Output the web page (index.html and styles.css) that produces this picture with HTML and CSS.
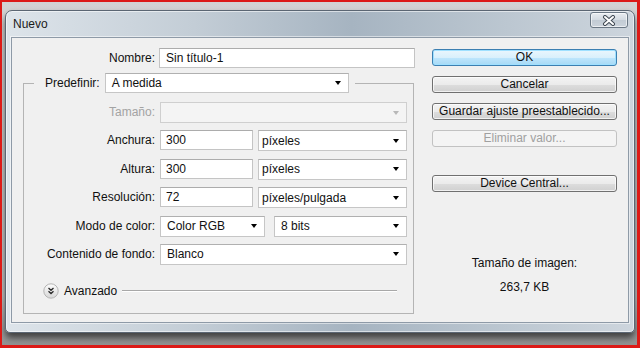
FILE: index.html
```html
<!DOCTYPE html>
<html lang="es">
<head>
    <meta charset="UTF-8">
    <meta name="viewport" content="width=device-width, initial-scale=1.0">
    <title>Nuevo</title>
    <link rel="stylesheet" href="styles.css">
</head>
<body>
    <div class="window">
        <div class="titlebar">
            <span class="title">Nuevo</span>
            <button class="close-btn" type="button">
                <svg width="14" height="11" viewBox="0 0 14 11">
                    <path d="M3 2 L11 9 M11 2 L3 9" stroke="#3f4852" stroke-width="4" stroke-linecap="round"/>
                    <path d="M3 2 L11 9 M11 2 L3 9" stroke="#fff" stroke-width="2" stroke-linecap="round"/>
                </svg>
            </button>
        </div>

        <div class="client">
            <div class="left-col">
                <div class="name-row">
                    <label for="name">Nombre:</label>
                    <input class="field" type="text" id="name" value="Sin título-1" readonly>
                </div>

                <fieldset class="group">
                    <legend>
                        <div class="preset">
                            <label>Predefinir:</label>
                            <div class="select preset-select"><span>A medida</span><i class="arrow"></i></div>
                        </div>
                    </legend>

                    <div class="form-grid">
                        <label class="is-disabled">Tamaño:</label>
                        <div class="select is-disabled"><span></span><i class="arrow"></i></div>

                        <label>Anchura:</label>
                        <div class="pair">
                            <input class="field" type="text" value="300" readonly>
                            <div class="select unit"><span>píxeles</span><i class="arrow"></i></div>
                        </div>

                        <label>Altura:</label>
                        <div class="pair">
                            <input class="field" type="text" value="300" readonly>
                            <div class="select unit"><span>píxeles</span><i class="arrow"></i></div>
                        </div>

                        <label>Resolución:</label>
                        <div class="pair">
                            <input class="field" type="text" value="72" readonly>
                            <div class="select unit"><span>píxeles/pulgada</span><i class="arrow"></i></div>
                        </div>

                        <label>Modo de color:</label>
                        <div class="pair color-pair">
                            <div class="select"><span>Color RGB</span><i class="arrow"></i></div>
                            <div class="select"><span>8 bits</span><i class="arrow"></i></div>
                        </div>

                        <label>Contenido de fondo:</label>
                        <div class="select"><span>Blanco</span><i class="arrow"></i></div>
                    </div>

                    <div class="advanced">
                        <svg class="advanced-icon" width="16" height="16" viewBox="0 0 16 16">
                            <defs>
                                <linearGradient id="knob" x1="0" y1="0" x2="0" y2="1">
                                    <stop offset="0" stop-color="#fdfdfd"/>
                                    <stop offset="1" stop-color="#d6d6d6"/>
                                </linearGradient>
                            </defs>
                            <circle cx="8" cy="8" r="7.2" fill="url(#knob)" stroke="#b4b4b4"/>
                            <path d="M5.5 5 L8 7.3 L10.5 5 M5.5 8.3 L8 10.6 L10.5 8.3" fill="none" stroke="#2a2a2a" stroke-width="1.3"/>
                        </svg>
                        <span>Avanzado</span>
                        <div class="advanced-line"></div>
                    </div>
                </fieldset>
            </div>

            <div class="right-col">
                <button class="btn btn-default" type="button">OK</button>
                <button class="btn" type="button">Cancelar</button>
                <button class="btn" type="button">Guardar ajuste preestablecido...</button>
                <button class="btn" type="button" disabled>Eliminar valor...</button>
                <button class="btn btn-device" type="button">Device Central...</button>

                <div class="size-info">
                    <p>Tamaño de imagen:</p>
                    <p class="size-value">263,7 KB</p>
                </div>
            </div>
        </div>
    </div>
</body>
</html>
```

FILE: styles.css
```css
html, body {
    margin: 0;
    padding: 0;
}

body {
    width: 640px;
    height: 348px;
    box-sizing: border-box;
    border-style: solid;
    border-color: #dc1a17;
    border-width: 2px 3px 3px 2px;
    background: linear-gradient(180deg, #d3d3d3 0%, #c4c4c4 85%, #8f8f8f 100%);
    font-family: 'Liberation Sans', Arial, sans-serif;
    font-size: 12px;
    color: #111;
    overflow: hidden;
}

.window {
    box-sizing: border-box;
    width: 630px;
    height: 323px;
    margin: 8px 0 0 3px;
    padding: 0 5px 9px 5px;
    border: 1px solid #5b6673;
    border-radius: 7px 7px 5px 5px;
    background: linear-gradient(90deg, #dde4ea 0%, #c3cdd6 30%, #a6b4c1 55%, #bcc7d1 80%, #cdd5dd 100%);
    box-shadow: 0 5px 7px rgba(0, 0, 0, 0.6), inset 0 0 0 1px rgba(255, 255, 255, 0.55);
}

/* title bar */
.titlebar {
    height: 26px;
    display: flex;
    align-items: flex-start;
}

.title {
    margin: 6px 0 0 2px;
    font-size: 12px;
    line-height: 14px;
    color: #1b1b1b;
}

.close-btn {
    margin: 1px 1px 0 auto;
    width: 38px;
    height: 16px;
    padding: 0;
    display: flex;
    align-items: center;
    justify-content: center;
    border: 1px solid #6a7784;
    border-radius: 3px;
    background: linear-gradient(180deg, #e9edf1 0%, #d3dae1 50%, #c2cbd4 51%, #ccd4dc 100%);
    box-shadow: inset 0 0 0 1px rgba(255, 255, 255, 0.6);
}

/* client area */
.client {
    box-sizing: border-box;
    height: 286px;
    display: flex;
    border: 1px solid #8e9aa7;
    background-color: #f0f0f0;
    box-shadow: 0 0 0 1px rgba(255, 255, 255, 0.5);
}

.left-col {
    width: 391px;
    padding: 10px 0 0 11px;
}

label {
    text-align: right;
    white-space: nowrap;
    line-height: 20px;
}

.name-row {
    display: grid;
    grid-template-columns: 132px 256px;
    column-gap: 4px;
    height: 20px;
}

.field {
    box-sizing: border-box;
    height: 20px;
    margin: 0;
    padding: 0 5px;
    border: 1px solid #c4c4c4;
    border-top-color: #acacac;
    background-color: #fff;
    font-family: 'Liberation Sans', Arial, sans-serif;
    font-size: 12px;
    color: #111;
    outline: none;
}

.name-row .field {
    padding-left: 6px;
}

/* group box */
.group {
    box-sizing: border-box;
    width: 391px;
    margin: 5px 0 0 0;
    padding: 9px 6px 14px 0;
    border: 1px solid #b4b4b4;
    min-inline-size: 0;
}

.group legend {
    margin-left: 10px;
    padding: 0 6px 0 11px;
}

.preset {
    display: flex;
    align-items: center;
    column-gap: 5px;
}

.preset-select {
    width: 244px;
    height: 20px;
}

.form-grid {
    display: grid;
    grid-template-columns: 131px 1fr;
    grid-auto-rows: 21px;
    column-gap: 5px;
    row-gap: 7.4px;
}

.form-grid label {
    line-height: 21px;
}

.select {
    box-sizing: border-box;
    display: flex;
    align-items: center;
    padding-left: 6px;
    border: 1px solid #c6c6c6;
    border-top-color: #b0b0b0;
    background-color: #fff;
    white-space: nowrap;
    min-width: 0;
}

.select .arrow {
    margin: 0 7px 0 auto;
    width: 0;
    height: 0;
    border-left: 3.5px solid transparent;
    border-right: 3.5px solid transparent;
    border-top: 4px solid #000;
}

.select.unit {
    padding-left: 3px;
}

.select.is-disabled {
    background-color: #f4f4f4;
    border-color: #cfcfcf;
}

.select.is-disabled .arrow {
    border-top-color: #b8b8b8;
}

label.is-disabled {
    color: #a3a3a3;
}

.pair {
    display: grid;
    grid-template-columns: 93px 1fr;
    column-gap: 5px;
}

.color-pair {
    grid-template-columns: 105px 1fr;
    column-gap: 9px;
}

.advanced {
    display: flex;
    align-items: center;
    height: 16px;
    margin: 18px 10px 0 19px;
}

.advanced-icon {
    flex: none;
}

.advanced span {
    margin-left: 5px;
}

.advanced-line {
    flex: 1;
    margin-left: 5px;
    border-top: 1px solid #a8a8a8;
    box-shadow: 0 1px 0 #fff;
}

/* buttons column */
.right-col {
    display: flex;
    flex-direction: column;
    margin-left: 18px;
    padding-top: 11px;
    width: 185px;
}

.btn {
    box-sizing: border-box;
    width: 185px;
    height: 17px;
    margin: 0 0 10px 0;
    padding: 0;
    border: 1px solid #707070;
    border-radius: 3px;
    background: linear-gradient(180deg, #f3f3f3 0%, #ebebeb 50%, #dddddd 51%, #d0d0d0 100%);
    box-shadow: inset 0 0 0 1px rgba(255, 255, 255, 0.7);
    font-family: 'Liberation Sans', Arial, sans-serif;
    font-size: 12px;
    line-height: 15px;
    color: #111;
}

.btn-default {
    border-color: #3c7fb1;
    background: linear-gradient(180deg, #eaf6fd 0%, #d9f0fc 50%, #bee6fd 51%, #a7d9f5 100%);
    box-shadow: inset 0 0 0 1px #9fe0ff;
}

.btn:disabled {
    border-color: #c2c2c2;
    background: #f4f4f4;
    box-shadow: none;
    color: #a0a0a0;
}

.btn-device {
    margin-top: 18px;
}

.size-info {
    margin-top: 54px;
    text-align: center;
}

.size-info p {
    margin: 0;
    line-height: 14px;
}

.size-info .size-value {
    margin-top: 10px;
}
```
